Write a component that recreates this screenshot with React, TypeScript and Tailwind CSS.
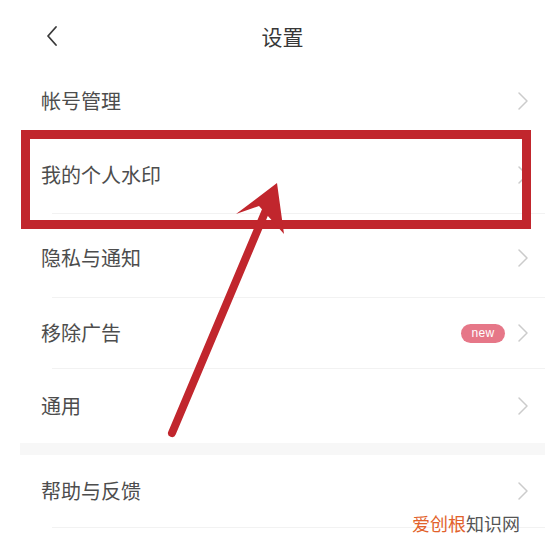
import React from "react";

const Chevron = () => (
  <svg width="12" height="20" viewBox="0 0 12 20" fill="none">
    <path d="M2 2 L10 10 L2 18" stroke="#cbcbcb" strokeWidth="1.5" strokeLinecap="round" strokeLinejoin="round" />
  </svg>
);

type Row = { label: string; h: string; badge?: boolean };

const Item = ({ label, h, badge }: Row) => (
  <div className={`flex items-center justify-between pl-[41px] pr-[16px] ${h}`}>
    <span className="text-[20px] text-[#4d4d4d] leading-none">{label}</span>
    <div className="flex items-center gap-[12px]">
      {badge && (
        <span className="flex items-center justify-center w-[44px] h-[19px] rounded-full bg-[#e67788] text-white text-[12px] leading-none tracking-wide" style={{ fontFamily: "Arial, 'Liberation Sans', sans-serif" }}>
          new
        </span>
      )}
      <Chevron />
    </div>
  </div>
);

const Divider = () => <div className="ml-[52px] h-px bg-[#f2f2f2]" />;

export default function App() {
  return (
    <div
      className="relative w-[545px] h-[547px] bg-white overflow-hidden"
      style={{ fontFamily: "'Noto Sans CJK SC', 'Noto Sans', sans-serif" }}
    >
      <div className="flex items-center h-[66px] pt-[6px]">
        <div className="w-[100px] pl-[45px] flex items-center">
          <svg width="14" height="22" viewBox="0 0 14 22" fill="none">
            <path d="M11 2 L3 11 L11 20" stroke="#3a3a3a" strokeWidth="1.8" strokeLinecap="round" strokeLinejoin="round" />
          </svg>
        </div>
        <div className="flex-1 text-center text-[21px] text-[#383838] leading-none">设置</div>
        <div className="w-[80px]" />
      </div>

      <Item label="帐号管理" h="h-[70px]" />
      <Item label="我的个人水印" h="h-[77px]" />
      <Divider />
      <Item label="隐私与通知" h="h-[83px] pt-[4px]" />
      <Divider />
      <Item label="移除广告" h="h-[70px]" badge />
      <Divider />
      <Item label="通用" h="h-[74px]" />
      <div className="ml-[20px] h-[12px] bg-[#f7f7f7]" />
      <Item label="帮助与反馈" h="h-[72px]" />
      <Divider />

      {/* annotation box */}
      <div className="absolute left-[21px] top-[130px] w-[510px] h-[99px] border-[9px] border-[#c1262d]" />

      {/* arrow */}
      <svg className="absolute inset-0" width="545" height="547" viewBox="0 0 545 547">
        <line x1="172" y1="433" x2="266" y2="210" stroke="#c1262d" strokeWidth="8" strokeLinecap="round" />
        <polygon points="277,183 236,214 259,206 284,234" fill="#c1262d" />
      </svg>

      {/* watermark */}
      <div className="absolute left-[412px] top-[514px] text-[18px] leading-none whitespace-nowrap">
        <span className="text-[#e2622b]">爱创根</span>
        <span className="text-[#555]">知识网</span>
      </div>
    </div>
  );
}
